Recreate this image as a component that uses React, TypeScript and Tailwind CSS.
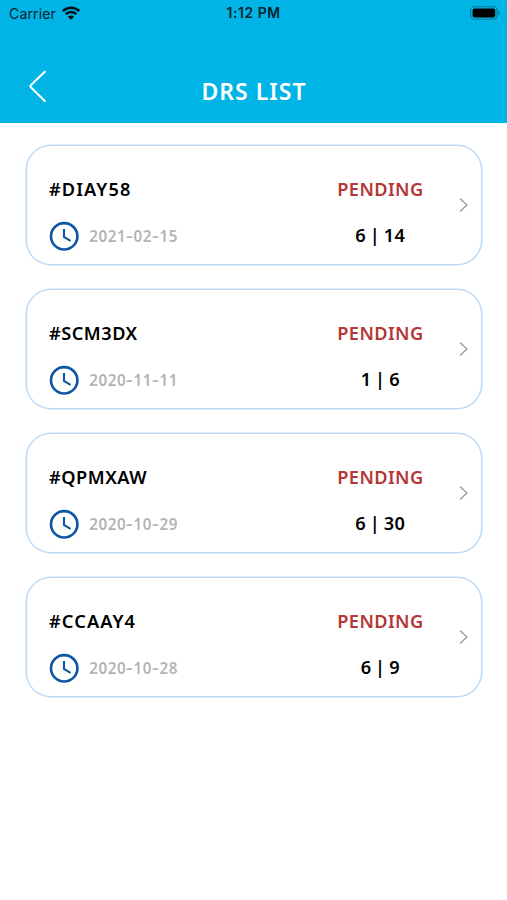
type Item = { id: string; date: string; count: string; idSpacing: string };

const items: Item[] = [
  { id: "#DIAY58", date: "2021-02-15", count: "6 | 14", idSpacing: "tracking-[1.1px]" },
  { id: "#SCM3DX", date: "2020-11-11", count: "1 | 6", idSpacing: "tracking-[0.5px]" },
  { id: "#QPMXAW", date: "2020-10-29", count: "6 | 30", idSpacing: "tracking-[0.5px]" },
  { id: "#CCAAY4", date: "2020-10-28", count: "6 | 9", idSpacing: "tracking-[1.1px]" },
];

function WifiIcon() {
  return (
    <svg className="-mt-[2px] ml-[6px] h-[14px] w-[18px]" viewBox="0 0 18 14" fill="none" stroke="#021219" strokeWidth="2.6">
      <path d="M0.8 5.1C5.4.6 12.6.6 17.2 5.1" />
      <path d="M3.7 8.2C6.7 5.2 11.3 5.2 14.3 8.2" />
      <path d="M5.8 10.8 9 13.8 12.2 10.8C10.3 9.1 7.7 9.1 5.8 10.8Z" fill="#021219" stroke="none" />
    </svg>
  );
}

function BatteryIcon() {
  return (
    <svg className="h-[15px] w-[31px]" viewBox="0 0 31 15" fill="none">
      <rect x="0.7" y="0.8" width="26.4" height="12.4" rx="3.6" stroke="#08789a" strokeWidth="1.1" />
      <rect x="2.6" y="2.6" width="22.6" height="8.8" rx="1.8" fill="#000" />
      <path d="M28.2 5C30.2 5.8 30.2 8.3 28.2 9.1Z" fill="#08789a" />
    </svg>
  );
}

function ClockIcon() {
  return (
    <svg className="h-[30px] w-[30px]" viewBox="0 0 30 30" fill="none" stroke="#0d55a5">
      <circle cx="15.2" cy="15.3" r="13.2" strokeWidth="2.6" />
      <path d="M15 8V15.9L21.5 19.8" strokeWidth="2.1" />
    </svg>
  );
}

function DateText({ value }: { value: string }) {
  return (
    <span className="ml-[10.2px] text-[15.2px] leading-[20px] font-semibold tracking-[0.55px] text-[#b4b4b4]">
      {value.split("").map((char, index) =>
        char === "-" ? (
          <span key={index} className="inline-block w-[7.4px] origin-left scale-x-[1.35]">-</span>
        ) : (
          char
        ),
      )}
    </span>
  );
}

function Card({ item }: { item: Item }) {
  return (
    <li className="flex h-[120px] rounded-[25px] border border-[#bbd9f6] bg-white pl-[22.5px] shadow-[0_0_0_0.5px_#bbd9f6]">
      <div className="flex w-[247px] flex-col pt-[31px]">
        <span className={`text-[18.2px] leading-[25px] font-semibold text-black ${item.idSpacing}`}>{item.id}</span>
        <div className="mt-[19px] flex h-[30px] items-center">
          <ClockIcon />
          <DateText value={item.date} />
        </div>
      </div>
      <div className="flex w-[168px] flex-col items-center pt-[31px]">
        <span className="ml-[0.8px] text-[18.2px] leading-[25px] font-semibold tracking-[0.4px] text-[#b63535]">PENDING</span>
        <span className="mt-[21px] ml-[0.5px] text-[18.2px] leading-[25px] font-semibold tracking-[0.3px] [word-spacing:-1.3px] text-black">{item.count}</span>
      </div>
      <svg className="-ml-[6px] mt-[51px] h-[16px] w-[12px]" viewBox="0 0 12 16" fill="none" stroke="#999" strokeWidth="1.3">
        <path d="M2 1.5 9 8 2 14.5" />
      </svg>
    </li>
  );
}

export default function App() {
  return (
    <main className="h-[900px] w-[507px] overflow-hidden bg-white font-['Noto_Sans',sans-serif]">
      <header className="h-[123px] bg-[#00b4e5]">
        <div className="grid h-[28px] grid-cols-3 items-center font-['Inter',sans-serif] text-[14px] text-[#04222c]">
          <div className="flex items-center pb-px pl-[9px]">
            <span className="tracking-[0.15px]">Carrier</span>
            <WifiIcon />
          </div>
          <span className="pb-px text-center text-[13.8px] font-semibold tracking-[0.6px]">1:12 PM</span>
          <div className="flex justify-end pb-px pr-[6px]">
            <BatteryIcon />
          </div>
        </div>
        <div className="grid h-[95px] grid-cols-[60px_1fr_60px]">
          <svg className="ml-[28px] mt-[41px] h-[34px] w-[20px]" viewBox="0 0 20 34" fill="none" stroke="white" strokeWidth="2.1" strokeLinecap="round" strokeLinejoin="round">
            <path d="M16.8 2.7 2.8 16.2Q1.8 17.2 2.8 18.2L16.8 32" />
          </svg>
          <h1 className="pt-[48px] pl-px text-center text-[23px] leading-[31px] font-semibold tracking-[1px] text-white">DRS LIST</h1>
        </div>
      </header>
      <ul className="flex flex-col gap-[24px] px-[25.5px] pt-[22px]">
        {items.map((item) => (
          <Card key={item.id} item={item} />
        ))}
      </ul>
    </main>
  );
}
